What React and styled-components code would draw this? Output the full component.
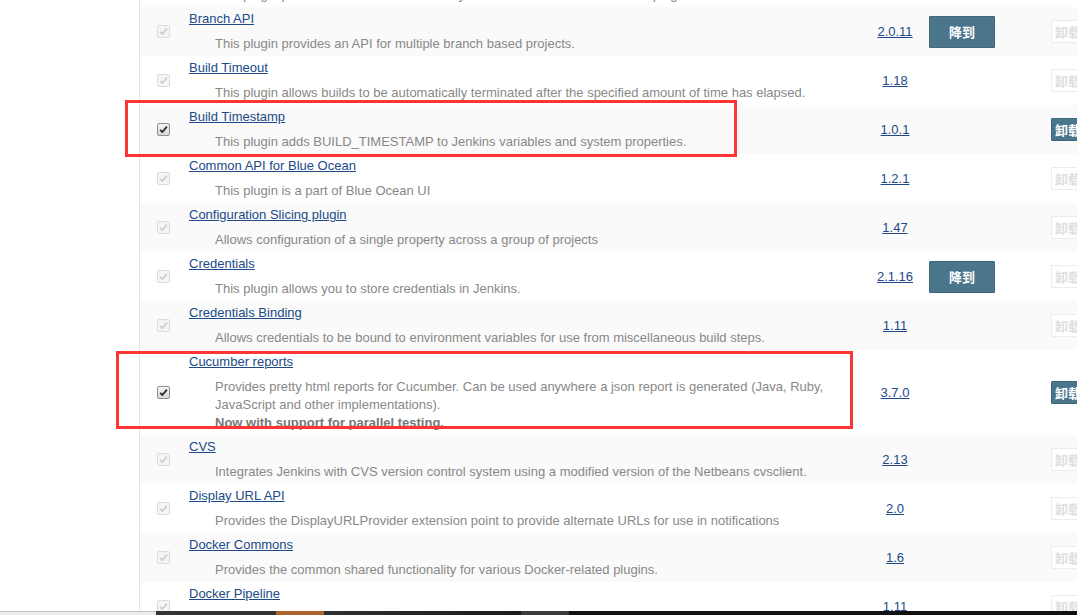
import styled, { createGlobalStyle } from 'styled-components';

const GlobalStyle = createGlobalStyle`
  html, body {
    margin: 0;
    padding: 0;
    background: #fff;
    font-family: "Liberation Sans", Arial, sans-serif;
    font-size: 13px;
    color: #333;
  }
  #root {
    height: 615px;
    overflow: hidden;
  }
`;

const plugins = [
  { name: 'Bouncy Castle API', desc: 'This plugin provides a stable API to Bouncy Castle related tasks for Jenkins plugins.', version: '2.16.2' },
  { name: 'Branch API', desc: 'This plugin provides an API for multiple branch based projects.', version: '2.0.11', downgrade: true },
  { name: 'Build Timeout', desc: 'This plugin allows builds to be automatically terminated after the specified amount of time has elapsed.', version: '1.18' },
  { name: 'Build Timestamp', desc: 'This plugin adds BUILD_TIMESTAMP to Jenkins variables and system properties.', version: '1.0.1', own: true, mark: { left: -15, top: -5, width: 612, height: 57 } },
  { name: 'Common API for Blue Ocean', desc: 'This plugin is a part of Blue Ocean UI', version: '1.2.1' },
  { name: 'Configuration Slicing plugin', desc: 'Allows configuration of a single property across a group of projects', version: '1.47' },
  { name: 'Credentials', desc: 'This plugin allows you to store credentials in Jenkins.', version: '2.1.16', downgrade: true },
  { name: 'Credentials Binding', desc: 'Allows credentials to be bound to environment variables for use from miscellaneous build steps.', version: '1.11' },
  {
    name: 'Cucumber reports',
    desc: 'Provides pretty html reports for Cucumber. Can be used anywhere a json report is generated (Java, Ruby, JavaScript and other implementations).',
    note: 'Now with support for parallel testing.',
    version: '3.7.0',
    own: true,
    mark: { left: -24, top: 1, width: 737, height: 78 },
  },
  { name: 'CVS', desc: 'Integrates Jenkins with CVS version control system using a modified version of the Netbeans cvsclient.', version: '2.13' },
  { name: 'Display URL API', desc: 'Provides the DisplayURLProvider extension point to provide alternate URLs for use in notifications', version: '2.0' },
  { name: 'Docker Commons', desc: 'Provides the common shared functionality for various Docker-related plugins.', version: '1.6' },
  { name: 'Docker Pipeline', desc: 'Build and use Docker containers from pipelines.', version: '1.11' },
];

const taskbar = [
  { width: 156, color: '#ececec', line: '#c4c4c4' },
  { width: 120, color: '#333333' },
  { width: 48, color: '#b0622b' },
  { width: 197, color: 'linear-gradient(90deg, #303030, #1c1a1c)' },
  { width: 48, color: '#3b3b3d' },
  { width: 508, color: '#121014' },
];

const Screen = styled.div`
  display: flex;
  flex-direction: column;
  height: 615px;
`;

const Main = styled.div`
  flex: 1;
  display: flex;
  min-height: 0;
  overflow: hidden;
`;

const Side = styled.aside`
  width: 139px;
  flex: none;
  border-right: 1px solid #e4e4e4;
`;

const Content = styled.div`
  flex: 1;
  min-width: 0;
`;

const List = styled.div`
  margin-top: -42px;
  width: 1000px;
`;

const Row = styled.div`
  position: relative;
  display: grid;
  grid-template-columns: 46px 674px 69px 122px 60px;
  align-items: center;
  background: ${({ $shaded }) => ($shaded ? '#fafafa' : '#fff')};
`;

const CheckCell = styled.div`
  display: flex;
  justify-content: center;
`;

const Box = styled.span`
  width: 11px;
  height: 11px;
  border: 1px solid ${({ $on }) => ($on ? '#8e8e8e' : '#dcdcdc')};
  border-radius: 2px;
  background: ${({ $on }) => ($on ? 'linear-gradient(#f4f4f4, #d9d9d9)' : '#f5f5f5')};
  display: flex;
  align-items: center;
  justify-content: center;

  svg {
    display: block;
  }
`;

const NameCell = styled.div`
  align-self: start;
  padding: 3px 0 3px 3px;
`;

const Title = styled.a`
  display: block;
  line-height: 18px;
  color: #204a87;
  text-decoration: underline;
  width: max-content;
`;

const Excerpt = styled.div`
  margin-top: 7px;
  padding-left: 26px;
  line-height: 18px;
  color: #888;
`;

const Note = styled.strong`
  display: block;
  color: #777;
`;

const VersionCell = styled.div`
  text-align: center;
  padding-left: 1px;
  padding-bottom: 1px;
`;

const Version = styled.a`
  color: #204a87;
  text-decoration: underline;
`;

const ButtonCell = styled.div`
  display: flex;
`;

const Button = styled.button`
  font-family: "Liberation Sans", "Noto Sans CJK SC", sans-serif;
  font-size: 13px;
  font-weight: bold;
  border-radius: 1px;
  cursor: pointer;
  color: #fff;
  background: #4b758b;
  border: 1px solid #3f677c;
  height: ${({ $big }) => ($big ? '32px' : '23px')};
  padding: ${({ $big }) => ($big ? '0 19px' : '0 3px')};
  width: ${({ $big }) => ($big ? '66px' : 'auto')};
  white-space: nowrap;

  &:disabled {
    cursor: default;
    color: #dedede;
    background: #fff;
    border-color: #ececec;
  }
`;

const Mark = styled.div`
  position: absolute;
  left: ${({ $m }) => $m.left}px;
  top: ${({ $m }) => $m.top}px;
  width: ${({ $m }) => $m.width}px;
  height: ${({ $m }) => $m.height}px;
  box-sizing: border-box;
  border: 3px solid #fd3535;
  pointer-events: none;
  z-index: 2;
`;

const Taskbar = styled.div`
  display: flex;
  height: 4px;
  flex: none;
`;

const Segment = styled.div`
  flex: none;
  width: ${({ $w }) => $w}px;
  background: ${({ $c }) => $c};
  box-shadow: ${({ $line }) => ($line ? `inset 0 1px 0 ${$line}` : 'none')};
`;

const Check = ({ on }) => (
  <Box $on={on}>
    <svg width="9" height="9" viewBox="0 0 9 9">
      <path
        d="M1.2 4.8 L3.4 7 L7.9 1.6"
        fill="none"
        stroke={on ? '#2e2e2e' : '#cfcfcf'}
        strokeWidth="1.9"
        strokeLinejoin="round"
      />
    </svg>
  </Box>
);

const PluginRow = ({ plugin, shaded }) => (
  <Row $shaded={shaded}>
    <CheckCell>
      <Check on={!!plugin.own} />
    </CheckCell>
    <NameCell>
      <Title href="#">{plugin.name}</Title>
      <Excerpt>
        {plugin.desc}
        {plugin.note && <Note>{plugin.note}</Note>}
      </Excerpt>
    </NameCell>
    <VersionCell>
      <Version href="#">{plugin.version}</Version>
    </VersionCell>
    <ButtonCell>{plugin.downgrade && <Button $big>降到</Button>}</ButtonCell>
    <ButtonCell>
      <Button disabled={!plugin.own}>卸载插件</Button>
    </ButtonCell>
    {plugin.mark && <Mark $m={plugin.mark} />}
  </Row>
);

export default function App() {
  return (
    <>
      <GlobalStyle />
      <Screen>
        <Main>
          <Side />
          <Content>
            <List>
              {plugins.map((p, i) => (
                <PluginRow key={p.name} plugin={p} shaded={i % 2 === 1} />
              ))}
            </List>
          </Content>
        </Main>
        <Taskbar>
          {taskbar.map((s, i) => (
            <Segment key={i} $w={s.width} $c={s.color} $line={s.line} />
          ))}
        </Taskbar>
      </Screen>
    </>
  );
}
